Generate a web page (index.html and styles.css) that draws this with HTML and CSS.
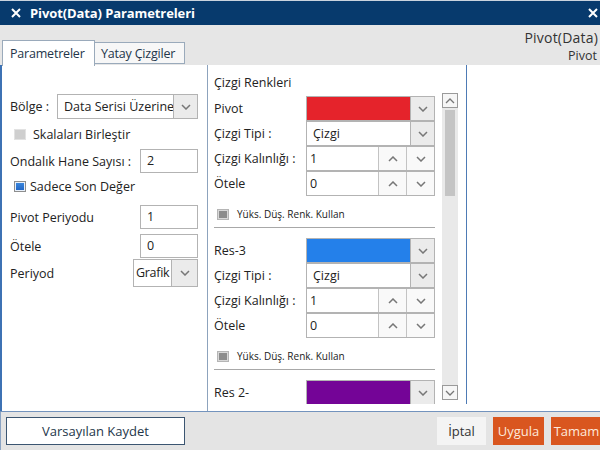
FILE: index.html
```html
<!DOCTYPE html>
<html>
<head>
<meta charset="utf-8">
<link rel="stylesheet" href="styles.css">
</head>
<body>
<div class="win">
  <div class="titlebar">
    <svg class="xicon" width="10" height="10" viewBox="0 0 10 10"><path d="M1 1L9 9M9 1L1 9" stroke="#fff" stroke-width="2" fill="none"/></svg>
    <span class="title">Pivot(Data) Parametreleri</span>
    <svg class="xicon xright" width="10" height="10" viewBox="0 0 10 10"><path d="M1 1L9 9M9 1L1 9" stroke="#fff" stroke-width="2" fill="none"/></svg>
  </div>
  <div class="header">
    <div class="tabs">
      <div class="tab active">Parametreler</div>
      <div class="tab">Yatay Çizgiler</div>
    </div>
    <div class="hinfo">
      <div class="hname">Pivot(Data)</div>
      <div class="hsub">Pivot</div>
    </div>
  </div>
  <div class="main">
    <div class="left">
      <div class="row r-bolge">
        <span>Bölge :</span>
        <div class="select w-bolge"><span class="val">Data Serisi Üzerine</span><span class="ddbtn"><svg width="10" height="6" viewBox="0 0 10 6"><path d="M1 1L5 5L9 1" stroke="#777" stroke-width="1.5" fill="none"/></svg></span></div>
      </div>
      <div class="row r-skala">
        <span class="cb cb-disabled"></span><span class="cblabel">Skalaları Birleştir</span>
      </div>
      <div class="row r-input">
        <span>Ondalık Hane Sayısı :</span>
        <div class="input w-num">2</div>
      </div>
      <div class="row r-sadece">
        <span class="cb cb-checked"></span><span class="cblabel2">Sadece Son Değer</span>
      </div>
      <div class="row r-input r-pivot">
        <span>Pivot Periyodu</span>
        <div class="input w-num">1</div>
      </div>
      <div class="row r-input r-otele">
        <span>Ötele</span>
        <div class="input w-num">0</div>
      </div>
      <div class="row r-periyod">
        <span>Periyod</span>
        <div class="select w-periyod"><span class="val">Grafik</span><span class="ddbtn"><svg width="10" height="6" viewBox="0 0 10 6"><path d="M1 1L5 5L9 1" stroke="#777" stroke-width="1.5" fill="none"/></svg></span></div>
      </div>
    </div>
    <div class="mid">
      <div class="mid-content">
        <div class="mhead">Çizgi Renkleri</div>

        <div class="block">
          <div class="grow"><span>Pivot</span><div class="colorsel"><span class="swatch red"></span><span class="ddbtn"><svg width="10" height="6" viewBox="0 0 10 6"><path d="M1 1L5 5L9 1" stroke="#777" stroke-width="1.5" fill="none"/></svg></span></div></div>
          <div class="grow"><span>Çizgi Tipi :</span><div class="select wide"><span class="val">Çizgi</span><span class="ddbtn"><svg width="10" height="6" viewBox="0 0 10 6"><path d="M1 1L5 5L9 1" stroke="#777" stroke-width="1.5" fill="none"/></svg></span></div></div>
          <div class="grow"><span>Çizgi Kalınlığı :</span><div class="spin"><span class="val">1</span><span class="sbtn"><svg width="10" height="6" viewBox="0 0 10 6"><path d="M1 5L5 1L9 5" stroke="#777" stroke-width="1.5" fill="none"/></svg></span><span class="sbtn"><svg width="10" height="6" viewBox="0 0 10 6"><path d="M1 1L5 5L9 1" stroke="#777" stroke-width="1.5" fill="none"/></svg></span></div></div>
          <div class="grow"><span>Ötele</span><div class="spin"><span class="val">0</span><span class="sbtn"><svg width="10" height="6" viewBox="0 0 10 6"><path d="M1 5L5 1L9 5" stroke="#777" stroke-width="1.5" fill="none"/></svg></span><span class="sbtn"><svg width="10" height="6" viewBox="0 0 10 6"><path d="M1 1L5 5L9 1" stroke="#777" stroke-width="1.5" fill="none"/></svg></span></div></div>
          <div class="cbrow"><span class="cb cb-gray"></span><span class="small">Yüks. Düş. Renk. Kullan</span></div>
          <div class="sep"></div>
        </div>

        <div class="block">
          <div class="grow"><span>Res-3</span><div class="colorsel"><span class="swatch blue"></span><span class="ddbtn"><svg width="10" height="6" viewBox="0 0 10 6"><path d="M1 1L5 5L9 1" stroke="#777" stroke-width="1.5" fill="none"/></svg></span></div></div>
          <div class="grow"><span>Çizgi Tipi :</span><div class="select wide"><span class="val">Çizgi</span><span class="ddbtn"><svg width="10" height="6" viewBox="0 0 10 6"><path d="M1 1L5 5L9 1" stroke="#777" stroke-width="1.5" fill="none"/></svg></span></div></div>
          <div class="grow"><span>Çizgi Kalınlığı :</span><div class="spin"><span class="val">1</span><span class="sbtn"><svg width="10" height="6" viewBox="0 0 10 6"><path d="M1 5L5 1L9 5" stroke="#777" stroke-width="1.5" fill="none"/></svg></span><span class="sbtn"><svg width="10" height="6" viewBox="0 0 10 6"><path d="M1 1L5 5L9 1" stroke="#777" stroke-width="1.5" fill="none"/></svg></span></div></div>
          <div class="grow"><span>Ötele</span><div class="spin"><span class="val">0</span><span class="sbtn"><svg width="10" height="6" viewBox="0 0 10 6"><path d="M1 5L5 1L9 5" stroke="#777" stroke-width="1.5" fill="none"/></svg></span><span class="sbtn"><svg width="10" height="6" viewBox="0 0 10 6"><path d="M1 1L5 5L9 1" stroke="#777" stroke-width="1.5" fill="none"/></svg></span></div></div>
          <div class="cbrow"><span class="cb cb-gray"></span><span class="small">Yüks. Düş. Renk. Kullan</span></div>
          <div class="sep"></div>
        </div>

        <div class="block">
          <div class="grow"><span>Res 2-</span><div class="colorsel"><span class="swatch purple"></span><span class="ddbtn"><svg width="10" height="6" viewBox="0 0 10 6"><path d="M1 1L5 5L9 1" stroke="#777" stroke-width="1.5" fill="none"/></svg></span></div></div>
        </div>
      </div>
      <div class="scrollbar">
        <span class="sbarbtn"><svg width="10" height="6" viewBox="0 0 10 6"><path d="M1 5L5 1L9 5" stroke="#777" stroke-width="1.3" fill="none"/></svg></span>
        <span class="thumb"></span>
        <span class="track"></span>
        <span class="sbarbtn"><svg width="10" height="6" viewBox="0 0 10 6"><path d="M1 1L5 5L9 1" stroke="#777" stroke-width="1.3" fill="none"/></svg></span>
      </div>
    </div>
    <div class="right"></div>
  </div>
  <div class="footer">
    <div class="btn-save">Varsayılan Kaydet</div>
    <div class="fbtns">
      <div class="btn btn-cancel">İptal</div>
      <div class="btn btn-orange">Uygula</div>
      <div class="btn btn-orange">Tamam</div>
    </div>
  </div>
</div>
</body>
</html>
```

FILE: styles.css
```css
* { box-sizing: border-box; }
html, body { margin: 0; padding: 0; }
body {
  width: 600px;
  height: 450px;
  overflow: hidden;
  font-family: "Open Sans", "Noto Sans", sans-serif;
  font-size: 12.5px;
  color: #222;
  background: #fff;
}
.win { width: 600px; height: 450px; display: flex; flex-direction: column; overflow: hidden; }

.titlebar {
  height: 25px;
  border-top: 1px solid #c9d3de;
  background: #073a6d;
  display: flex;
  align-items: center;
  color: #fff;
  flex: none;
}
.xicon { margin-left: 11px; flex: none; }
.title { margin-left: 9px; font-weight: 700; font-size: 13px; letter-spacing: -0.1px; }
.xright { margin-left: auto; margin-right: 2px; }

.header {
  height: 40px;
  background: #e6e6e6;
  display: flex;
  flex: none;
}
.tabs { display: flex; align-items: flex-end; padding-left: 2px; }
.tab {
  height: 22px;
  padding: 0 5px;
  border: 1px solid #9aaabb;
  border-bottom: none;
  background: #f7f7f7;
  color: #24364a;
  font-size: 12.5px;
  letter-spacing: -0.2px;
  line-height: 21px;
  white-space: nowrap;
}
.tab.active {
  height: 26px;
  width: 93px;
  background: #fff;
  padding-left: 7px;
  line-height: 26px;
  margin-bottom: -1px;
  position: relative;
}
.tab:not(.active) { width: 90px; border-left: none; border-bottom: 1px solid #9aaabb; margin-bottom: 1px; padding-left: 6px; }
.hinfo { margin-left: auto; margin-right: 2px; text-align: right; padding-top: 4px; color: #333; white-space: nowrap; }
.hname { font-size: 14px; line-height: 18px; letter-spacing: 0.2px; }
.hsub { font-size: 12.5px; line-height: 17px; margin-right: 1px; }

.main { height: 347px; display: flex; border-bottom: 1px solid #7393bd; flex: none; }

.left {
  width: 208px;
  border-left: 2px solid #3d72b4;
  border-right: 1px solid #8da3bd;
  padding: 29px 9px 0 8px;
  display: flex;
  flex-direction: column;
}
.row { display: flex; align-items: center; justify-content: space-between; }
.r-bolge { height: 25px; }
.r-skala { height: 30px; justify-content: flex-start; }
.r-input { height: 24px; }
.r-sadece { height: 26px; justify-content: flex-start; }
.r-pivot { margin-top: 6px; }
.r-otele { margin-top: 5px; }
.r-periyod { height: 28px; margin-top: 1px; }

.cb { width: 12px; height: 11px; flex: none; display: inline-block; }
.cb-disabled { margin-left: 4px; background: #cfcfcf; border: 1px solid #e2e2e2; }
.cb-checked { margin-left: 4px; background: linear-gradient(#3d8ae0, #1f62c2); border: 1px solid #8e8e8e; box-shadow: inset 0 0 0 1px #e8f0fa; }
.cb-gray { margin-left: 3px; background: #8c8c8c; border: 1px solid #b5b5b5; box-shadow: inset 0 0 0 1px #d8d8d8; }
.cblabel { margin-left: 7px; }
.cblabel2 { margin-left: 4px; }

.select {
  display: flex;
  border: 1px solid #b3b3b3;
  background: #fff;
  height: 25px;
  overflow: hidden;
}
.select .val { flex: 1; padding-left: 6px; line-height: 23px; white-space: nowrap; overflow: hidden; }
.ddbtn {
  width: 24px;
  flex: none;
  background: #ebebeb;
  border-left: 1px solid #b3b3b3;
  display: flex;
  align-items: center;
  justify-content: center;
}
.w-bolge { width: 141px; }
.w-periyod { width: 65px; height: 28px; }
.w-periyod .val { padding-left: 2px; line-height: 26px; letter-spacing: -0.3px; overflow: hidden; }
.w-periyod .ddbtn { width: 26px; }

.input {
  border: 1px solid #b3b3b3;
  height: 24px;
  padding-left: 6px;
  line-height: 22px;
  background: #fff;
}
.w-num { width: 58px; }

.mid {
  width: 259px;
  border-right: 1px solid #4e7bb5;
  padding-left: 6px;
  display: flex;
  gap: 7px;
  height: 339px;
  overflow: hidden;
}
.mid-content { width: 221px; flex: none; padding-top: 8px; }
.mhead { height: 20px; line-height: 20px; margin-bottom: 3px; }
.block { display: flex; flex-direction: column; }
.grow { display: grid; grid-template-columns: 92px 129px; height: 25px; align-items: center; }
.colorsel, .spin, .select.wide { display: flex; height: 25px; }
.colorsel { border: 1px solid #b3b3b3; }
.swatch { flex: 1; }
.red { background: #e5232b; }
.blue { background: #2480ea; }
.purple { background: #740497; }
.select.wide { width: 129px; }
.spin { border: 1px solid #b3b3b3; }
.spin .val { flex: 1; padding-left: 3px; line-height: 23px; }
.sbtn {
  width: 28px;
  flex: none;
  border-left: 1px solid #c3c3c3;
  background: #f9f9f9;
  display: flex;
  align-items: center;
  justify-content: center;
}
.cbrow { display: flex; align-items: center; height: 16px; margin-top: 10px; margin-bottom: 5px; }
.small { font-size: 10px; margin-left: 8px; }
.sep { height: 1px; background: #a8a8a8; margin-bottom: 10px; }

.scrollbar {
  width: 16px;
  margin-top: 28px;
  height: 307px;
  background: #e9e9e9;
  display: flex;
  flex-direction: column;
  align-items: center;
  flex: none;
}
.sbarbtn {
  width: 16px;
  height: 15px;
  border: 1px solid #9a9a9a;
  background: #f6f6f6;
  display: flex;
  align-items: center;
  justify-content: center;
  flex: none;
}
.thumb { width: 10px; height: 86px; margin-top: 2px; background: #c4c4c4; flex: none; }
.track { flex: 1; }

.right { flex: 1; }

.footer {
  flex: 1;
  background: #e4e4e4;
  display: flex;
  padding-top: 5px;
  padding-left: 1px;
  border-left: 1px solid #8aa3c3;
}
.btn-save {
  width: 179px;
  height: 28px;
  margin-left: 4px;
  background: #fff;
  border: 1px solid #3b5571;
  text-align: center;
  line-height: 26px;
  font-size: 13px;
  color: #24364a;
}
.fbtns { margin-left: auto; display: flex; gap: 7px; margin-right: -2px; }
.btn { height: 28px; line-height: 28px; text-align: center; font-size: 13px; }
.btn-cancel { width: 49px; background: #f4f4f4; color: #333; }
.btn-orange { width: 51px; background: #d9561f; color: #fde9dc; }
```
